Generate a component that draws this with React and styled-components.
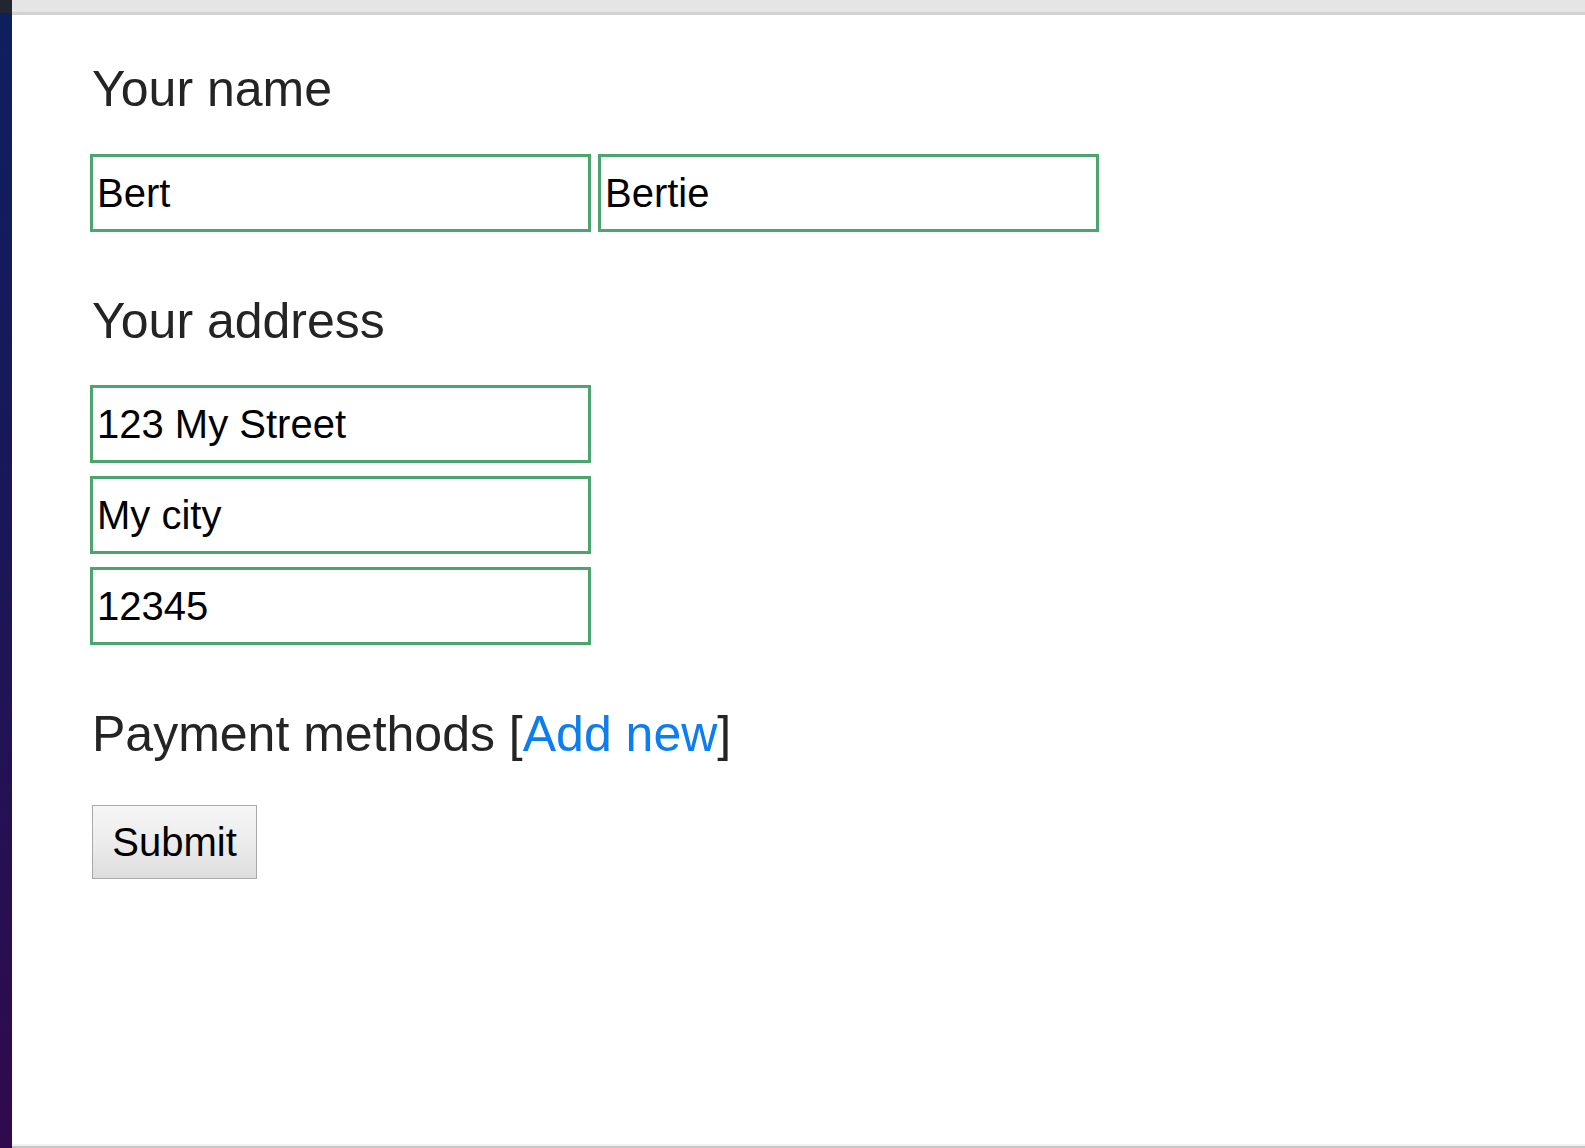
import React from 'react';
import styled, { createGlobalStyle } from 'styled-components';

const GlobalStyle = createGlobalStyle`
  html, body {
    margin: 0;
    padding: 0;
    height: 100%;
    background: #ffffff;
  }

  #root {
    height: 100%;
  }
`;

const Window = styled.div`
  display: flex;
  width: 100%;
  height: 1148px;
  overflow: hidden;
  font-family: "Liberation Sans", Arial, sans-serif;
`;

const SideStrip = styled.div`
  display: flex;
  flex-direction: column;
  width: 12px;
  flex-shrink: 0;
  background: linear-gradient(180deg, #0d1f60 0%, #1a1758 45%, #300a4c 100%);
`;

const StripCorner = styled.div`
  height: 13px;
  background: #23262f;
`;

const Viewport = styled.div`
  display: flex;
  flex-direction: column;
  flex: 1;
  min-width: 0;
`;

const TopBar = styled.div`
  height: 12px;
  background: #e5e5e5;
  border-bottom: 3px solid #d2d2d2;
`;

const BottomBar = styled.div`
  height: 2px;
  border-top: 2px solid #f2f2f2;
  background: #c6c6c6;
`;

const Page = styled.main`
  flex: 1;
  padding: 46px 0 0 78px;
  background: #ffffff;
`;

const Form = styled.form`
  display: flex;
  flex-direction: column;
  align-items: flex-start;
`;

const Section = styled.section`
  display: flex;
  flex-direction: column;
  align-items: flex-start;
  margin-bottom: ${(p) => p.$after}px;
`;

const Heading = styled.h2`
  margin: 0 0 ${(p) => p.$gap}px 2px;
  font-size: 50px;
  font-weight: 400;
  line-height: 57px;
  color: #242424;
`;

const AddLink = styled.a`
  color: #0d7ef2;
  text-decoration: none;
  cursor: pointer;
`;

const Row = styled.div`
  display: flex;
  gap: 7px;
`;

const Stack = styled.div`
  display: flex;
  flex-direction: column;
  gap: 13px;
`;

const Field = styled.input`
  box-sizing: border-box;
  width: 501px;
  height: 78px;
  margin: 0;
  padding: 0 4px;
  border: 3px solid #4ca56f;
  border-radius: 0;
  outline: none;
  background: #ffffff;
  font-family: "Liberation Sans", Arial, sans-serif;
  font-size: 40px;
  color: #000000;
`;

const SubmitButton = styled.button`
  box-sizing: border-box;
  width: 165px;
  height: 74px;
  margin-left: 2px;
  padding: 0 19px;
  border: 1px solid #a9a9a9;
  border-radius: 0;
  background: linear-gradient(180deg, #f6f6f6 0%, #ececec 50%, #dddddd 100%);
  font-family: "Liberation Sans", Arial, sans-serif;
  font-size: 40px;
  color: #000000;
  cursor: pointer;
`;

const App = () => {
  return (
    <>
      <GlobalStyle />
      <Window>
        <SideStrip>
          <StripCorner />
        </SideStrip>
        <Viewport>
          <TopBar />
          <Page>
            <Form onSubmit={(e) => e.preventDefault()}>
              <Section $after={61}>
                <Heading $gap={36}>Your name</Heading>
                <Row>
                  <Field defaultValue="Bert" />
                  <Field defaultValue="Bertie" />
                </Row>
              </Section>
              <Section $after={61}>
                <Heading $gap={35}>Your address</Heading>
                <Stack>
                  <Field defaultValue="123 My Street" />
                  <Field defaultValue="My city" />
                  <Field defaultValue="12345" />
                </Stack>
              </Section>
              <Section $after={0}>
                <Heading $gap={42}>
                  Payment methods [<AddLink>Add new</AddLink>]
                </Heading>
                <SubmitButton type="submit">Submit</SubmitButton>
              </Section>
            </Form>
          </Page>
          <BottomBar />
        </Viewport>
      </Window>
    </>
  );
};

export default App;
